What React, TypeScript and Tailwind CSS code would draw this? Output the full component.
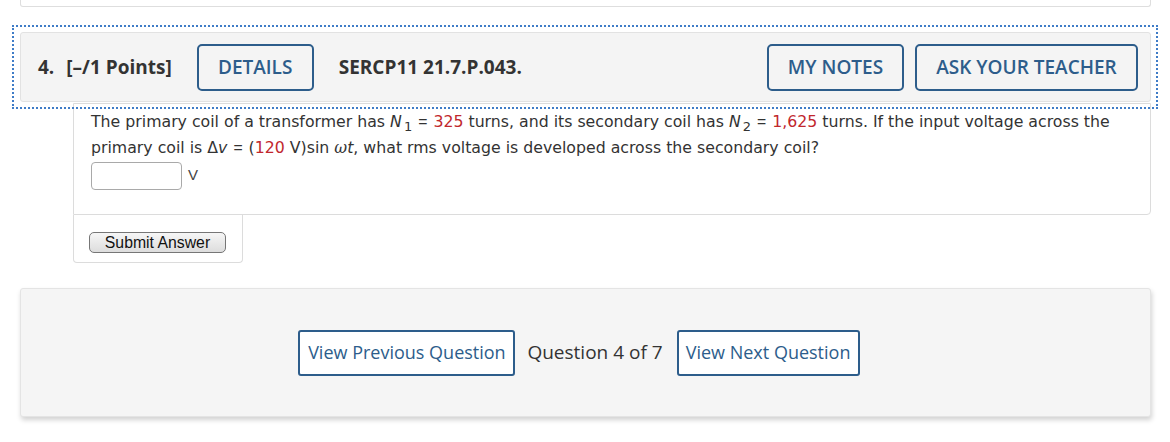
const navy = 'text-[#2d5d8b]';

const Red = ({ children }: { children: React.ReactNode }) => (
  <span className="text-[#c1272d]">{children}</span>
);

const Sub = ({ n }: { n: string }) => (
  <span className="inline-block">
    <i>N</i>
    <sub className="text-[13px] relative top-[4px] ml-[2px]">{n}</sub>
  </span>
);

const Eq = () => <span className="font-['Liberation_Sans',sans-serif] mx-[1px]">=</span>;

const App = () => {
  return (
    <div className="w-[1170px] h-[442px] bg-white overflow-hidden font-['Open_Sans',sans-serif] text-[#333]">
      {/* previous question card, mostly scrolled away */}
      <div className="ml-[20px] w-[1131px] h-[7px] border-x border-b border-[#dedede] rounded-b-[3px]"></div>

      <div className="relative z-10 mt-[18px] ml-[12px] w-[1146px] h-[84px] border-2 border-dotted border-[#3f7cc7] pt-[5px] pl-[6px]">
        <div className="flex items-center w-[1131px] h-[70px] bg-[#f4f4f4] border border-[#e2e2e2] rounded-[3px] pl-[17px] pr-[12px]">
          <h4 className="text-[19px] font-bold whitespace-nowrap">
            4.<span className="ml-[12px]">[–/1 Points]</span>
          </h4>
          <button className={`ml-[25px] w-[117px] h-[47px] border-2 border-[#2d5d8b] rounded-[5px] text-[19px] font-semibold ${navy}`}>
            DETAILS
          </button>
          <span className="ml-[25px] text-[19px] font-bold whitespace-nowrap">SERCP11 21.7.P.043.</span>
          <div className="ml-auto flex gap-[11px]">
            <button className={`w-[137px] h-[47px] border-2 border-[#2d5d8b] rounded-[5px] text-[19px] font-semibold ${navy}`}>
              MY NOTES
            </button>
            <button className={`w-[223px] h-[47px] border-2 border-[#2d5d8b] rounded-[5px] text-[19px] font-semibold ${navy}`}>
              ASK YOUR TEACHER
            </button>
          </div>
        </div>
      </div>

      <div className="-mt-[6px] ml-[73px] w-[1078px]">
        <div className="border border-[#dcdcdc] rounded-br-[4px] pt-[5px] pl-[17px] pr-[20px] pb-[24px] font-['DejaVu_Sans',sans-serif] text-[15.75px] leading-[26px] text-[#333]">
          <p>
            The primary coil of a transformer has <Sub n="1" /> <Eq /> <Red>325</Red> turns, and its secondary coil has{' '}
            <Sub n="2" /> <Eq /> <Red>1,625</Red> turns. If the input voltage across the primary coil is Δ<i>v</i> <Eq /> (
            <Red>120</Red> V)sin <i className="font-['DejaVu_Serif',serif]">ω</i>
            <i>t</i>, what rms voltage is developed across the secondary coil?
          </p>
          <div className="flex items-start gap-[6px] mt-[1px]">
            <input className="w-[91px] h-[28px] border border-[#a9a9a9] rounded-[4px] bg-white" />
            <span className="font-['Liberation_Sans',sans-serif] text-[15px] leading-[26px] text-[#444]">V</span>
          </div>
        </div>
        <div className="w-[170px] h-[48px] border border-t-0 border-[#dcdcdc] rounded-b-[4px] pt-[15px] pl-[15px]">
          <button className="w-[137px] h-[21px] border border-[#767676] rounded-[5px] bg-gradient-to-b from-[#f6f6f6] to-[#dddddd] font-['Liberation_Sans',sans-serif] text-[15.8px] leading-[19px] text-[#111]">
            Submit Answer
          </button>
        </div>
      </div>

      <div className="mt-[25px] ml-[20px] w-[1131px] h-[129px] bg-[#f5f5f5] border border-[#e4e4e4] rounded-[3px] shadow-[1px_3px_5px_rgba(0,0,0,0.18)] flex items-center justify-center">
        <div className="flex items-center -ml-[13px]">
          <button className={`w-[217px] h-[46px] bg-white border-2 border-[#2d5d8b] rounded-[3px] text-[18px] ${navy}`}>
            View Previous Question
          </button>
          <span className="ml-[12px] text-[19px] text-[#333]">Question 4 of 7</span>
          <button className={`ml-[14px] w-[183px] h-[46px] bg-white border-2 border-[#2d5d8b] rounded-[3px] text-[18px] ${navy}`}>
            View Next Question
          </button>
        </div>
      </div>
    </div>
  );
};

export default App;
